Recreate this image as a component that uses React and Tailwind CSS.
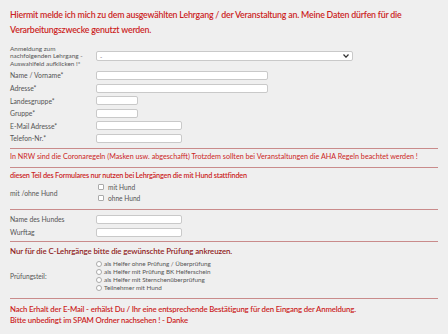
import React from 'react'

const red = 'text-[#cc1f1f]'

const Hr = () => <div className="h-px bg-[#c98b8b] mx-[10px]" />

const Field = ({ label, w }) => (
    <div className="flex items-center h-[12.6px] pl-[10px]">
        <span className="w-[86px] text-[6.8px] text-[#555]">{label}</span>
        <div className={`${w} h-[9px] bg-white border border-[#c9c9c9] rounded-[2px]`} />
    </div>
)

const Box = () => <span className="inline-block w-[6px] h-[6px] border border-[#aaa] bg-white rounded-[1px] mr-[4px]" />
const Radio = () => <span className="inline-block w-[6px] h-[6px] border border-[#aaa] bg-white rounded-full mr-[2px]" />

const App = () => {
    return (
        <div className="w-[448px] h-[334px] bg-[#efefef] overflow-hidden" style={{ fontFamily: 'Lato, "DejaVu Sans", sans-serif' }}>
            {/* HEADING */}
            <div className={`pt-[7px] px-[10px] text-[8.8px] tracking-[-0.2px] leading-[15px] font-semibold ${red}`}>
                Hiermit melde ich mich zu dem ausgewählten Lehrgang / der Veranstaltung an. Meine Daten dürfen für die Verarbeitungszwecke genutzt werden.
            </div>

            {/* SELECT */}
            <div className="flex items-center pl-[10px] mt-[8px]">
                <div className="w-[86px] text-[6.4px] leading-[7.4px] text-[#555]">
                    Anmeldung zum<br />nachfolgenden Lehrgang -<br />Auswahlfeld aufklicken !*
                </div>
                <div className="w-[257px] h-[10px] bg-white border border-[#c9c9c9] rounded-[2px] flex items-center justify-between px-[3px] text-[6px] text-[#555]">
                    <span>-</span>
                    <svg width="6" height="4" viewBox="0 0 6 4"><path d="M0.5 0.5 L3 3.2 L5.5 0.5" fill="none" stroke="#333" strokeWidth="1.2" /></svg>
                </div>
            </div>

            <div className="mt-[2px]">
                <Field label="Name / Vorname*" w="w-[172px]" />
                <Field label="Adresse*" w="w-[172px]" />
                <Field label="Landesgruppe*" w="w-[42px]" />
                <Field label="Gruppe*" w="w-[42px]" />
                <Field label="E-Mail Adresse*" w="w-[86px]" />
                <Field label="Telefon-Nr.*" w="w-[86px]" />
            </div>

            <div className="mt-[3px]"><Hr /></div>
            <div className={`px-[10px] h-[18px] flex items-center text-[7.2px] whitespace-nowrap ${red}`}>
                In NRW sind die Coronaregeln (Masken usw. abgeschafft) Trotzdem sollten bei Veranstaltungen die AHA Regeln beachtet werden !
            </div>
            <Hr />

            <div className={`px-[10px] pt-[3px] text-[7.3px] tracking-[-0.2px] leading-[10px] font-semibold ${red}`}>
                diesen Teil des Formulares nur nutzen bei Lehrgängen die mit Hund stattfinden
            </div>
            <div className="flex items-center pl-[10px] h-[24px]">
                <span className="w-[86px] text-[6.8px] text-[#555]">mit /ohne Hund</span>
                <div className="flex flex-col gap-[3px] text-[6.6px] text-[#555] pl-[2px]">
                    <div className="flex items-center leading-[8px]"><Box />mit Hund</div>
                    <div className="flex items-center leading-[8px]"><Box />ohne Hund</div>
                </div>
            </div>
            <div className="mt-[4px]"><Hr /></div>

            <div className="mt-[3.5px]">
                <Field label="Name des Hundes" w="w-[86px]" />
                <Field label="Wurftag" w="w-[86px]" />
            </div>
            <div className="mt-[3px]"><Hr /></div>

            <div className="px-[10px] pt-[4px] text-[7.9px] tracking-[-0.1px] leading-[11px] font-semibold text-[#8f1c1c]">
                Nur für die C-Lehrgänge bitte die gewünschte Prüfung ankreuzen.
            </div>
            <div className="flex items-center pl-[10px] mt-[3px]">
                <span className="w-[86px] text-[6.6px] text-[#555]">Prüfungsteil:</span>
                <div className="flex flex-col text-[6.3px] leading-[8px] text-[#555]">
                    <div className="flex items-center"><Radio />als Helfer ohne Prüfung / Überprüfung</div>
                    <div className="flex items-center"><Radio />als Helfer mit Prüfung BK Helferschein</div>
                    <div className="flex items-center"><Radio />als Helfer mit Sternchenüberprüfung</div>
                    <div className="flex items-center"><Radio />Teilnehmer mit Hund</div>
                </div>
            </div>
            <div className="mt-[6px]"><Hr /></div>

            <div className={`px-[10px] pt-[5px] text-[7.8px] tracking-[-0.15px] leading-[11px] font-semibold ${red}`}>
                Nach Erhalt der E-Mail - erhälst Du / Ihr eine entsprechende Bestätigung für den Eingang der Anmeldung.<br />
                Bitte unbedingt im SPAM Ordner nachsehen ! - Danke
            </div>
        </div>
    )
}

export default App
